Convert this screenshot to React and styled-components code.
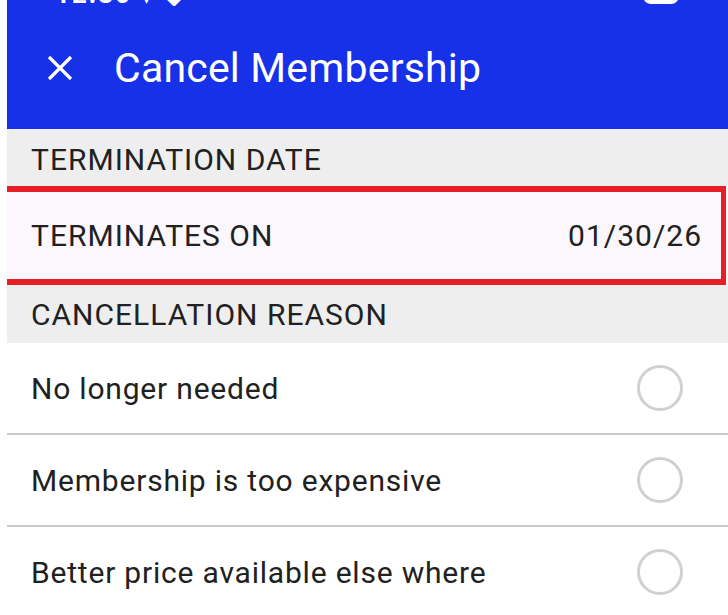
import React from 'react';
import styled, { createGlobalStyle } from 'styled-components';

const GlobalStyle = createGlobalStyle`
  html, body {
    margin: 0;
    padding: 0;
    background: #fff;
  }
  body {
    font-family: Roboto, "Noto Sans", "Liberation Sans", sans-serif;
    overflow: hidden;
  }
`;

const Screen = styled.div`
  margin-left: 7px;
  width: 721px;
  height: 615px;
  overflow: hidden;
  background: #fff;
`;

const Header = styled.header`
  background: #1631e8;
  color: #fff;
  border-bottom: 4px solid #f2eef9;
`;

const StatusBar = styled.div`
  height: 6px;
  overflow: hidden;
  display: flex;
  align-items: flex-end;
  justify-content: space-between;
  padding: 0 48px 0 48px;
`;

const StatusText = styled.span`
  font-size: 26px;
  font-weight: 700;
  line-height: 24px;
  letter-spacing: 2px;
`;

const StatusIcons = styled.div`
  display: flex;
  align-items: flex-end;
  gap: 56px;
`;

const Toolbar = styled.div`
  height: 123px;
  display: flex;
  align-items: center;
  padding-left: 40px;
  gap: 41px;
`;

const Title = styled.h1`
  margin: 0;
  font-size: 41px;
  font-weight: 400;
  letter-spacing: 0.2px;
`;

const SectionHeader = styled.div`
  height: ${p => p.$h}px;
  background: #eeeeee;
  display: flex;
  align-items: center;
  padding-left: 24px;
  font-size: 30px;
  letter-spacing: 1px;
  color: #212121;
`;

const HighlightRow = styled.div`
  position: relative;
  height: 99px;
  background: #fbf7fd;
  display: flex;
  align-items: center;
  justify-content: space-between;
  padding: 0 26px 0 24px;
  font-size: 30px;
  letter-spacing: 1px;
  color: #212121;

  &::after {
    content: '';
    position: absolute;
    top: 0;
    bottom: 0;
    left: -6px;
    right: 2px;
    border: 6px solid #e61e25;
    border-right-width: 5px;
    pointer-events: none;
  }
`;

const ReasonRow = styled.label`
  height: 90px;
  display: flex;
  align-items: center;
  justify-content: space-between;
  padding: 0 45px 0 24px;
  font-size: 30px;
  letter-spacing: 0.8px;
  color: #212121;
  border-bottom: ${p => (p.$last ? 'none' : '2px solid #cacaca')};
`;

const Radio = styled.span`
  width: 40px;
  height: 40px;
  border-radius: 50%;
  border: 3px solid #d0d0d0;
`;

const CloseIcon = () => (
  <svg width="26" height="26" viewBox="0 0 26 26" fill="none" stroke="#fff" strokeWidth="3.2">
    <path d="M2 2 L24 24 M24 2 L2 24" />
  </svg>
);

const BatteryIcon = () => (
  <svg width="38" height="6" viewBox="0 0 38 6">
    <rect x="1" y="-20" width="36" height="24" rx="8" fill="#fff" />
  </svg>
);

const reasons = [
  'No longer needed',
  'Membership is too expensive',
  'Better price available else where',
];

export default function App() {
  return (
    <>
      <GlobalStyle />
      <Screen>
        <Header>
          <StatusBar>
            <StatusText>12:30 ▾ ◆</StatusText>
            <StatusIcons>
              <StatusText>·</StatusText>
              <BatteryIcon />
            </StatusIcons>
          </StatusBar>
          <Toolbar>
            <CloseIcon />
            <Title>Cancel Membership</Title>
          </Toolbar>
        </Header>
        <SectionHeader $h={53}>TERMINATION DATE</SectionHeader>
        <HighlightRow>
          <span>TERMINATES ON</span>
          <span>01/30/26</span>
        </HighlightRow>
        <SectionHeader $h={58}>CANCELLATION REASON</SectionHeader>
        {reasons.map((r, i) => (
          <ReasonRow key={r} $last={i === reasons.length - 1}>
            <span>{r}</span>
            <Radio />
          </ReasonRow>
        ))}
      </Screen>
    </>
  );
}
